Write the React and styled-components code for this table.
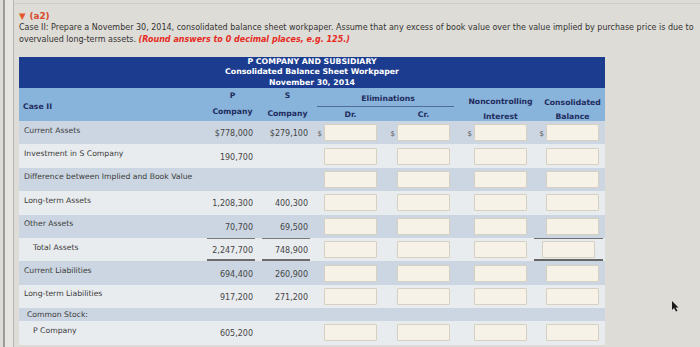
import React from "react"
import styled, { createGlobalStyle } from "styled-components"

const GlobalStyle = createGlobalStyle`
  body {
    margin: 0;
    background: #dedcd6;
    font-family: "DejaVu Sans", Verdana, sans-serif;
  }
`

const COLS = "186px 55px 55px 71px 75px 79px 65px"

const Shell = styled.div`
  position: relative;
  width: 700px;
  height: 347px;
  overflow: hidden;
  display: flex;
  background: #dedcd6;
`

const Rail = styled.div`
  width: 8px;
  margin-left: 3px;
  border-left: 2px solid #9c9b97;
  border-right: 1px solid #b9b7b2;
  background: #e6e5e1;
  flex-shrink: 0;
`

const Main = styled.div`
  flex: 1;
  margin-top: 3px;
  border-top: 1px solid #cfcdc7;
  padding: 6px 0 0 5px;
`

const Heading = styled.div`
  display: flex;
  align-items: center;
  gap: 4px;
  color: #d9482a;
  font-size: 8.8px;
  font-weight: bold;
  height: 11px;
`

const Arrow = styled.span`
  font-size: 8.5px;
  color: #e4572c;
`

const Intro = styled.p`
  margin: 1px 0 0;
  font-size: 8px;
  line-height: 12px;
  color: #333333;
  white-space: nowrap;
`

const Hint = styled.span`
  color: #e62a1f;
  font-weight: bold;
  font-style: italic;
`

const Table = styled.div`
  width: 586px;
  margin-top: 11px;
`

const Banner = styled.div`
  background: #1c3d8f;
  color: #ffffff;
  font-weight: bold;
  font-size: 7.8px;
  line-height: 10.3px;
  text-align: center;
  height: 31px;
  box-sizing: border-box;
`

const SubHead = styled.div`
  display: grid;
  grid-template-columns: ${COLS};
  background: #88b3da;
  height: 33px;
  color: #1e2c5e;
  font-weight: bold;
  font-size: 7.7px;
`

const HeadLabel = styled.div`
  align-self: center;
  padding: 4px 0 0 4px;
`

const HeadStack = styled.div`
  display: flex;
  flex-direction: column;
  align-items: center;
  justify-content: space-between;
  padding: ${(p) => p.$pad || "3px 0 5px"};
`

const Elims = styled.div`
  grid-column: span 2;
  display: flex;
  flex-direction: column;
  align-items: center;
  padding-top: 6px;
`

const ElimRule = styled.div`
  width: 137px;
  margin: 3px 0 0 -6px;
  border-top: 1px solid #4f6e96;
`

const ElimCols = styled.div`
  display: grid;
  grid-template-columns: 71px 75px;
  width: 100%;
  text-align: center;
  padding-top: 3px;
`

const Row = styled.div`
  display: grid;
  grid-template-columns: ${COLS};
  height: ${(p) => (p.$short ? "13px" : "23.4px")};
  background: ${(p) => (p.$shade ? "#cbd6e2" : "#e9ecef")};
  font-size: 7.7px;
  color: #3b3b3b;
`

const Label = styled.div`
  display: flex;
  align-items: center;
  padding-left: ${(p) => 5 + (p.$indent || 0)}px;
  padding-bottom: ${(p) => (p.$short ? 0 : 5)}px;
  white-space: nowrap;
`

const Num = styled.div`
  display: flex;
  align-items: center;
  justify-content: flex-end;
  font-size: 8px;
  color: #454545;
  padding-right: 7px;
  padding-top: 2px;
  ${(p) =>
    p.$ruled &&
    `
    margin: 0 5px 0 2px;
    padding-right: 2px;
    border-top: 1px solid #7a7a7a;
    border-bottom: 2px solid #6c6c6c;
  `}
`

const InputCell = styled.div`
  display: flex;
  align-items: center;
  justify-content: center;
  ${(p) =>
    p.$ruled &&
    `
    margin: 0 2px 0 -6px;
    border-top: 1px solid #6f6f6f;
    border-bottom: 2px solid #666;
  `}
`

const Field = styled.div`
  position: relative;
  width: 53px;
  height: 17px;
  box-sizing: border-box;
  background: #f6f2e8;
  border: 1px solid #d6d0c1;
  border-radius: 1px;

  ${(p) =>
    p.$dollar &&
    `
    &::before {
      content: "$";
      position: absolute;
      right: calc(100% + 3px);
      top: 5px;
      font-size: 7px;
      color: #555;
    }
  `}
`

const Cursor = styled.svg`
  position: absolute;
  left: 671px;
  top: 301px;
`

const rows = [
  { label: "Current Assets", p: "$778,000", s: "$279,100", dollar: true },
  { label: "Investment in S Company", p: "190,700" },
  { label: "Difference between Implied and Book Value" },
  { label: "Long-term Assets", p: "1,208,300", s: "400,300" },
  { label: "Other Assets", p: "70,700", s: "69,500" },
  { label: "Total Assets", p: "2,247,700", s: "748,900", indent: 9, ruled: true },
  { label: "Current Liabilities", p: "694,400", s: "260,900" },
  { label: "Long-term Liabilities", p: "917,200", s: "271,200" },
  { label: "Common Stock:", indent: 3, short: true, noInputs: true },
  { label: "P Company", p: "605,200", indent: 9 },
]

const App = () => {
  return (
    <Shell>
      <GlobalStyle />
      <Rail />
      <Main>
        <Heading>
          <Arrow>▼</Arrow>
          <span>(a2)</span>
        </Heading>
        <Intro>
          Case II: Prepare a November 30, 2014, consolidated balance sheet workpaper. Assume that any excess of book value over the value implied by purchase price is due to
          <br />
          overvalued long-term assets. <Hint>(Round answers to 0 decimal places, e.g. 125.)</Hint>
        </Intro>

        <Table>
          <Banner>
            <div>P COMPANY AND SUBSIDIARY</div>
            <div>Consolidated Balance Sheet Workpaper</div>
            <div>November 30, 2014</div>
          </Banner>
          <SubHead>
            <HeadLabel>Case II</HeadLabel>
            <HeadStack>
              <span>P</span>
              <span>Company</span>
            </HeadStack>
            <HeadStack $pad="3px 0 3px">
              <span>S</span>
              <span>Company</span>
            </HeadStack>
            <Elims>
              <span>Eliminations</span>
              <ElimRule />
              <ElimCols>
                <span>Dr.</span>
                <span>Cr.</span>
              </ElimCols>
            </Elims>
            <HeadStack $pad="9px 0 0">
              <span>Noncontrolling</span>
              <span>Interest</span>
            </HeadStack>
            <HeadStack $pad="10px 0 0">
              <span>Consolidated</span>
              <span>Balance</span>
            </HeadStack>
          </SubHead>

          {rows.map((r, i) => (
            <Row key={i} $shade={i % 2 === 0} $short={r.short}>
              <Label $indent={r.indent} $short={r.short}>{r.label}</Label>
              <Num $ruled={r.ruled}>{r.p}</Num>
              <Num $ruled={r.ruled}>{r.s}</Num>
              {!r.noInputs &&
                [0, 1, 2, 3].map((c) => (
                  <InputCell key={c} $ruled={r.ruled && c === 3}>
                    <Field $dollar={r.dollar} />
                  </InputCell>
                ))}
            </Row>
          ))}
        </Table>
      </Main>
      <Cursor width="8" height="11" viewBox="0 0 8 11">
        <path d="M1 0 L1 9 L3 7 L5 10.5 L6.5 9.8 L4.6 6.5 L7.5 6.5 Z" fill="#1a1a1a" />
      </Cursor>
    </Shell>
  )
}

export default App
